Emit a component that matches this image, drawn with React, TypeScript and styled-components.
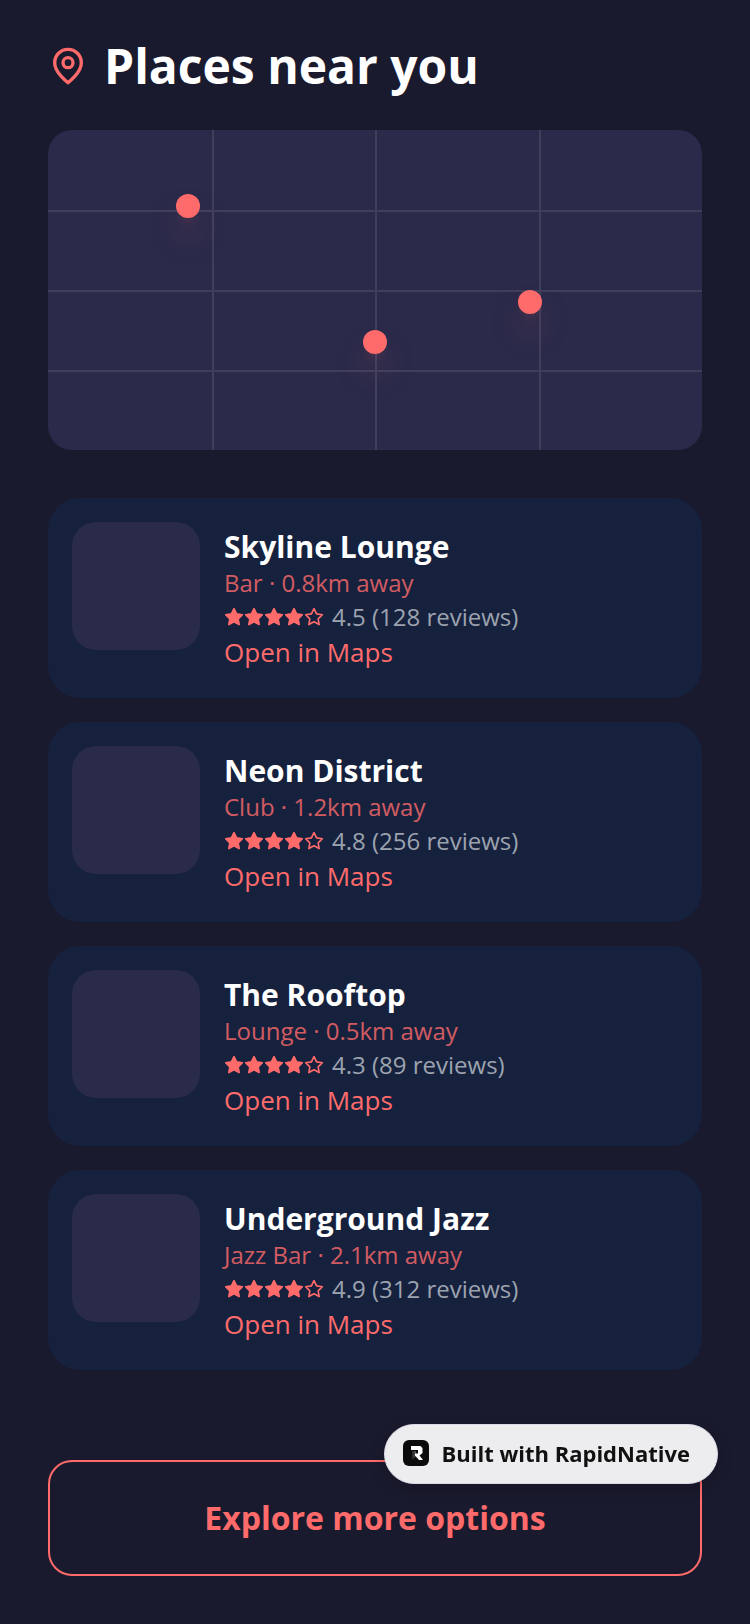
import React from "react";
import styled, { createGlobalStyle } from "styled-components";

const color = {
  page: "#1a1a2e",
  map: "#2a2a4a",
  grid: "#3f3f5c",
  card: "#16213e",
  accent: "#ff6b6b",
  muted: "#9ca3af",
};

const GlobalStyle = createGlobalStyle`
  *, *::before, *::after { box-sizing: border-box; }
  body {
    margin: 0;
    background: ${color.page};
    font-family: "Open Sans", "Noto Sans", sans-serif;
  }
`;

const Page = styled.main`
  display: flex;
  flex-direction: column;
  min-height: 100vh;
  padding: 32px 48px 48px;
`;

const Header = styled.header`
  display: flex;
  align-items: center;
  gap: 16px;
  margin-bottom: 30px;
`;

const Title = styled.h1`
  margin: 0;
  color: #fff;
  font-size: 48px;
  font-weight: 700;
  line-height: 68px;
`;

const MapPanel = styled.section`
  position: relative;
  height: 320px;
  margin-bottom: 48px;
  overflow: hidden;
  border-radius: 24px;
  background: ${color.map};
`;

const GridLine = styled.span<{ $axis: "row" | "column"; $at: number }>`
  position: absolute;
  background: ${color.grid};
  ${({ $axis, $at }) =>
    $axis === "row"
      ? `top: ${$at}%; left: 0; right: 0; height: 2px;`
      : `left: ${$at}%; top: 0; bottom: 0; width: 2px;`}
`;

type PinPlace = { top?: string; bottom?: string; left?: string; right?: string };

const MapPin = styled.span<{ $place: PinPlace }>`
  position: absolute;
  top: ${({ $place }) => $place.top ?? "auto"};
  right: ${({ $place }) => $place.right ?? "auto"};
  bottom: ${({ $place }) => $place.bottom ?? "auto"};
  left: ${({ $place }) => $place.left ?? "auto"};
  width: 24px;
  height: 24px;
  border-radius: 50%;
  background: ${color.accent};
  box-shadow:
    0 20px 30px -6px rgba(255, 107, 107, 0.5),
    0 8px 12px -8px rgba(255, 107, 107, 0.4);
`;

const PlaceList = styled.ul`
  display: flex;
  flex-direction: column;
  gap: 24px;
  margin: 0 0 48px;
  padding: 0;
  list-style: none;
`;

const PlaceCard = styled.li`
  display: flex;
  gap: 24px;
  padding: 24px;
  border-radius: 32px;
  background: ${color.card};
`;

const Thumbnail = styled.div`
  flex: none;
  width: 128px;
  height: 128px;
  border-radius: 24px;
  background: ${color.map};
`;

const Details = styled.div`
  display: flex;
  flex: 1;
  flex-direction: column;
  align-items: flex-start;
  min-width: 0;
  padding: 5px 0;
`;

const PlaceName = styled.h2`
  margin: 0;
  color: #fff;
  font-size: 30px;
  font-weight: 700;
  line-height: 40px;
`;

const PlaceMeta = styled.p`
  margin: 0;
  color: ${color.accent};
  font-size: 24px;
  line-height: 32px;
  opacity: 0.8;
`;

const Rating = styled.div`
  display: flex;
  align-items: center;
  gap: 8px;
  color: ${color.muted};
  font-size: 24px;
  line-height: 36px;
`;

const Stars = styled.span`
  display: flex;
`;

const MapsLink = styled.a`
  color: ${color.accent};
  font-size: 26px;
  line-height: 34px;
  text-decoration: none;
`;

const ExploreButton = styled.button`
  margin-top: auto;
  padding: 34px 24px;
  border: 2px solid ${color.accent};
  border-radius: 24px;
  background: transparent;
  color: ${color.accent};
  font-family: inherit;
  font-size: 32px;
  font-weight: 700;
  line-height: 44px;
  cursor: pointer;
`;

const Badge = styled.a`
  position: fixed;
  right: 32px;
  bottom: 140px;
  display: flex;
  align-items: center;
  gap: 12px;
  padding: 12px 27px 14px 18px;
  border: 1px solid #dcdae6;
  border-radius: 30px;
  background: #ededf0;
  box-shadow: 0 4px 16px rgba(0, 0, 0, 0.2);
  color: #111;
  font-size: 22px;
  font-weight: 700;
  line-height: 32px;
  text-decoration: none;
`;

function LocationIcon() {
  return (
    <svg width="40" height="40" viewBox="0 0 24 24" fill="none" stroke={color.accent} strokeWidth="2" strokeLinecap="round" strokeLinejoin="round" aria-hidden="true">
      <path d="M20 10c0 6-8 12-8 12s-8-6-8-12a8 8 0 0 1 16 0Z" />
      <circle cx="12" cy="10" r="3" />
    </svg>
  );
}

function StarIcon({ filled }: { filled: boolean }) {
  return (
    <svg width="20" height="20" viewBox="0 0 24 24" fill={filled ? color.accent : "none"} stroke={color.accent} strokeWidth="2" strokeLinecap="round" strokeLinejoin="round" aria-hidden="true">
      <polygon points="12 2 15.09 8.26 22 9.27 17 14.14 18.18 21.02 12 17.77 5.82 21.02 7 14.14 2 9.27 8.91 8.26 12 2" />
    </svg>
  );
}

function BadgeLogo() {
  return (
    <svg width="26" height="26" viewBox="0 0 26 26" aria-hidden="true">
      <defs>
        <linearGradient id="stem" x1="0" y1="0" x2="1" y2="0">
          <stop offset="0" stopColor="#222" />
          <stop offset="1" stopColor="#555" />
        </linearGradient>
      </defs>
      <rect width="26" height="26" rx="6" fill="#0b0b0c" />
      <path d="M9 11h4v5l-4 4z" fill="url(#stem)" />
      <path d="M8 6h9.5L19.5 8v5L16.5 15.500 20 20h-4L12 15.500V13.500h3V10H8z" fill="#fff" />
    </svg>
  );
}

const pins: PinPlace[] = [
  { top: "64px", left: "128px" },
  { bottom: "96px", left: "calc(50% - 12px)" },
  { top: "160px", right: "160px" },
];

const places = [
  { name: "Skyline Lounge", kind: "Bar", distance: "0.8km", rating: 4.5, reviews: 128 },
  { name: "Neon District", kind: "Club", distance: "1.2km", rating: 4.8, reviews: 256 },
  { name: "The Rooftop", kind: "Lounge", distance: "0.5km", rating: 4.3, reviews: 89 },
  { name: "Underground Jazz", kind: "Jazz Bar", distance: "2.1km", rating: 4.9, reviews: 312 },
];

export default function App() {
  return (
    <>
      <GlobalStyle />
      <Page>
        <Header>
          <LocationIcon />
          <Title>Places near you</Title>
        </Header>

        <MapPanel aria-label="Map">
          {[25, 50, 75].map((at) => (
            <React.Fragment key={at}>
              <GridLine $axis="row" $at={at} />
              <GridLine $axis="column" $at={at} />
            </React.Fragment>
          ))}
          {pins.map((place, i) => (
            <MapPin key={i} $place={place} />
          ))}
        </MapPanel>

        <PlaceList>
          {places.map((place) => (
            <PlaceCard key={place.name}>
              <Thumbnail />
              <Details>
                <PlaceName>{place.name}</PlaceName>
                <PlaceMeta>{`${place.kind} · ${place.distance} away`}</PlaceMeta>
                <Rating>
                  <Stars>
                    {[1, 2, 3, 4, 5].map((n) => (
                      <StarIcon key={n} filled={n <= Math.floor(place.rating)} />
                    ))}
                  </Stars>
                  <span>{`${place.rating} (${place.reviews} reviews)`}</span>
                </Rating>
                <MapsLink href="#">Open in Maps</MapsLink>
              </Details>
            </PlaceCard>
          ))}
        </PlaceList>

        <ExploreButton type="button">Explore more options</ExploreButton>
      </Page>

      <Badge href="#">
        <BadgeLogo />
        Built with RapidNative
      </Badge>
    </>
  );
}
